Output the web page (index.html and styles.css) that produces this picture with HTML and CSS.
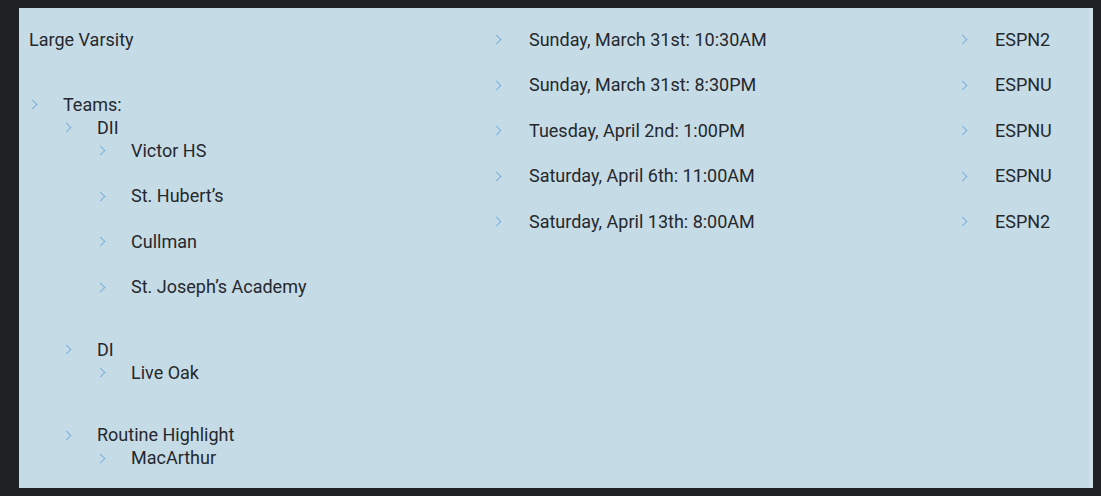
FILE: index.html
```html
<!DOCTYPE html>
<html>
<head>
<meta charset="utf-8">
<link rel="stylesheet" href="styles.css">
</head>
<body>
<div class="panel">
  <div class="col col-left">
    <p class="title">Large Varsity</p>
    <ul class="tree">
      <li class="item"><span class="chev"></span><div class="body"><span class="label">Teams:</span>
        <ul class="tree">
          <li class="item"><span class="chev"></span><div class="body"><span class="label">DII</span>
            <ul class="tree leaves">
              <li class="item"><span class="chev"></span><div class="body">Victor HS</div></li>
              <li class="item"><span class="chev"></span><div class="body">St. Hubert’s</div></li>
              <li class="item"><span class="chev"></span><div class="body">Cullman</div></li>
              <li class="item"><span class="chev"></span><div class="body">St. Joseph’s Academy</div></li>
            </ul></div>
          </li>
          <li class="item group"><span class="chev"></span><div class="body"><span class="label">DI</span>
            <ul class="tree leaves">
              <li class="item"><span class="chev"></span><div class="body">Live Oak</div></li>
            </ul></div>
          </li>
          <li class="item group"><span class="chev"></span><div class="body"><span class="label">Routine Highlight</span>
            <ul class="tree leaves">
              <li class="item"><span class="chev"></span><div class="body">MacArthur</div></li>
            </ul></div>
          </li>
        </ul></div>
      </li>
    </ul>
  </div>
  <div class="col col-mid">
    <ul class="tree leaves">
      <li class="item"><span class="chev"></span><div class="body">Sunday, March 31st: 10:30AM</div></li>
      <li class="item"><span class="chev"></span><div class="body">Sunday, March 31st: 8:30PM</div></li>
      <li class="item"><span class="chev"></span><div class="body">Tuesday, April 2nd: 1:00PM</div></li>
      <li class="item"><span class="chev"></span><div class="body">Saturday, April 6th: 11:00AM</div></li>
      <li class="item"><span class="chev"></span><div class="body">Saturday, April 13th: 8:00AM</div></li>
    </ul>
  </div>
  <div class="col col-right">
    <ul class="tree leaves">
      <li class="item"><span class="chev"></span><div class="body">ESPN2</div></li>
      <li class="item"><span class="chev"></span><div class="body">ESPNU</div></li>
      <li class="item"><span class="chev"></span><div class="body">ESPNU</div></li>
      <li class="item"><span class="chev"></span><div class="body">ESPNU</div></li>
      <li class="item"><span class="chev"></span><div class="body">ESPN2</div></li>
    </ul>
  </div>
</div>
</body>
</html>
```
FILE: styles.css
```css
html, body {
  margin: 0;
  padding: 0;
  background: #202124;
}
body {
  padding: 8px 8px 8px 19px;
  font-family: Roboto, "Liberation Sans", sans-serif;
  font-size: 18px;
  line-height: 23px;
  color: #25282d;
}
.panel {
  width: 1074px;
  height: 480px;
  box-sizing: border-box;
  background: #c5dbe6;
  padding: 19.5px 10px 0 10px;
  display: grid;
  grid-template-columns: 466px 466px 1fr;
  align-items: start;
  box-shadow: inset -5px 0 0 -1px #cfe0e8, inset -2px 0 0 0 #a9b8c0;
}
.title {
  margin: 0 0 42px 0;
}
.tree {
  list-style: none;
  margin: 0;
  padding: 0;
}
.item {
  display: flex;
}
.chev {
  flex: 0 0 34px;
  position: relative;
  height: 23px;
}
.chev::before {
  content: "";
  position: absolute;
  left: 0px;
  top: 8.5px;
  width: 6px;
  height: 6px;
  border-top: 1.7px solid #7db1dc;
  border-right: 1.7px solid #7db1dc;
  transform: rotate(45deg);
}
.col-mid .chev::before,
.col-right .chev::before {
  left: -2px;
}
.body {
  flex: 1;
  white-space: nowrap;
}
.label {
  display: block;
}
.leaves > .item + .item {
  margin-top: 22.5px;
}
.group {
  margin-top: 39.5px;
}
.col-mid .leaves > .item + .item,
.col-right .leaves > .item + .item {
  margin-top: 22.5px;
}
```
